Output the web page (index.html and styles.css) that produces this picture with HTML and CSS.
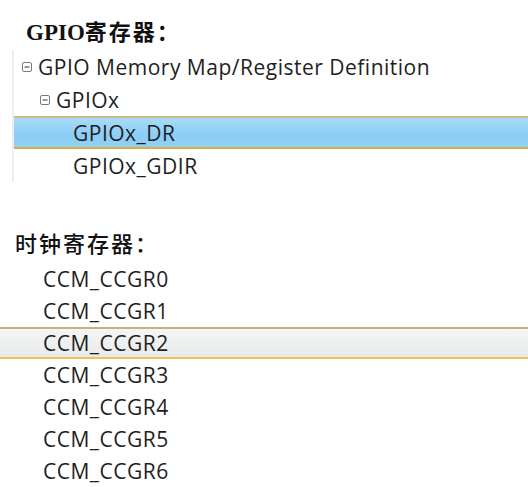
FILE: index.html
```html
<!DOCTYPE html>
<html lang="zh">
<head>
<meta charset="utf-8">
<link rel="stylesheet" href="styles.css">
</head>
<body>
<div class="page">
  <h2 class="title-gpio">GPIO<span class="cjk">寄存器：</span></h2>
  <div class="tree">
    <div class="row lvl0"><svg class="tog" viewBox="0 0 10 10"><rect x="0.5" y="0.5" width="9" height="9" rx="1.5" fill="#fff" stroke="#7a7a7a"/><line x1="2.5" y1="5" x2="7.5" y2="5" stroke="#333"/></svg><span>GPIO Memory Map/Register Definition</span></div>
    <div class="row lvl1"><svg class="tog" viewBox="0 0 10 10"><rect x="0.5" y="0.5" width="9" height="9" rx="1.5" fill="#fff" stroke="#7a7a7a"/><line x1="2.5" y1="5" x2="7.5" y2="5" stroke="#333"/></svg><span>GPIOx</span></div>
    <div class="row lvl2 sel-blue"><span>GPIOx_DR</span></div>
    <div class="row lvl2"><span>GPIOx_GDIR</span></div>
  </div>
  <h2 class="title-ccm">时钟寄存器：</h2>
  <div class="list">
    <div class="item">CCM_CCGR0</div>
    <div class="item">CCM_CCGR1</div>
    <div class="item sel-gray">CCM_CCGR2</div>
    <div class="item">CCM_CCGR3</div>
    <div class="item">CCM_CCGR4</div>
    <div class="item">CCM_CCGR5</div>
    <div class="item">CCM_CCGR6</div>
  </div>
</div>
</body>
</html>
```
FILE: styles.css
```css
html, body {
  margin: 0;
  padding: 0;
  background: #ffffff;
  overflow: hidden;
}
.page {
  width: 528px;
  display: flex;
  flex-direction: column;
}
.page > * { flex: none; }
.title-gpio {
  margin: 0;
  height: 50px;
  box-sizing: border-box;
  padding: 16px 0 0 26px;
  font-family: "Liberation Serif", "Noto Sans CJK SC", serif;
  font-weight: bold;
  font-size: 23px;
  line-height: 28px;
  color: #111;
}
.title-gpio .cjk {
  font-family: "Noto Sans CJK SC", sans-serif;
  font-weight: 700;
  font-size: 22px;
  letter-spacing: 2px;
}
.tree {
  margin-left: 12px;
  border-left: 2px solid #eeeeee;
  display: flex;
  flex-direction: column;
}
.row {
  height: 33px;
  flex: none;
  box-sizing: border-box;
  display: flex;
  align-items: center;
  font-family: "Open Sans", "Noto Sans", sans-serif;
  font-size: 21px;
  letter-spacing: 0.5px;
  color: #1e1e1e;
}
.tog {
  width: 10px;
  height: 10px;
  margin-right: 6px;
  flex: none;
}
.lvl0 { padding-left: 8px; }
.lvl1 { padding-left: 26px; }
.lvl2 { padding-left: 59px; }
.sel-blue {
  border-top: 2px solid #c9bc8f;
  border-bottom: 2px solid #d8ae3e;
  background: linear-gradient(#a8dbf8, #8ccdf6 60%, #93d0f4);
}
.title-ccm {
  margin: 0;
  height: 81px;
  box-sizing: border-box;
  padding: 46px 0 0 15px;
  font-family: "Noto Sans CJK SC", sans-serif;
  font-weight: 500;
  font-size: 22px;
  letter-spacing: 2px;
  line-height: 28px;
  color: #111;
}
.list {
  display: flex;
  flex-direction: column;
}
.item {
  height: 32px;
  flex: none;
  box-sizing: border-box;
  display: flex;
  align-items: center;
  padding-left: 43px;
  font-family: "Open Sans", "Noto Sans", sans-serif;
  font-size: 21px;
  letter-spacing: 0.5px;
  color: #1e1e1e;
}
.sel-gray {
  border-top: 2px solid #c7b27c;
  border-bottom: 2px solid #efbf5e;
  background: linear-gradient(#f5f5f5, #eceeee 70%, #e4eae8);
}
```
